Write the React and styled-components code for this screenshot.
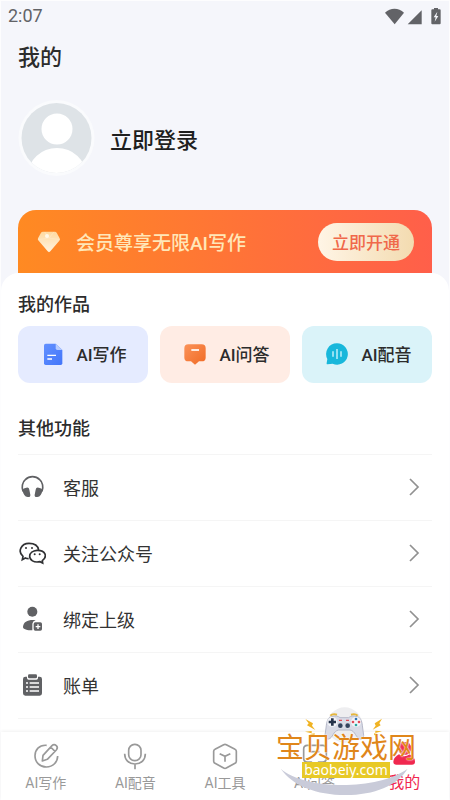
import React, { useState } from 'react';
import styled, { createGlobalStyle } from 'styled-components';

const GlobalStyle = createGlobalStyle`
	* {
		box-sizing: border-box;
	}
	body {
		margin: 0;
		background-color: #f5f6fb;
		color: #2c2c2c;
		font-family: Roboto, 'Noto Sans CJK SC', sans-serif;
	}
	button {
		border: none;
		font-family: inherit;
		color: inherit;
		cursor: pointer;
	}
	a {
		color: inherit;
		text-decoration: none;
	}
	svg {
		display: block;
		flex-shrink: 0;
	}
`;
const PageStyled = styled.div`
	min-height: 100vh;
	display: flex;
	flex-direction: column;
	border: 1px solid #fdfdfe;
	border-bottom: none;
`;
const StatusBar = styled.div`
	height: 29px;
	padding: 0 7px;
	display: flex;
	align-items: center;
	justify-content: space-between;
	font-size: 18px;
	color: #626367;
`;
const HeaderStyled = styled.header`
	padding: 11px 17px 0;
`;
const PageTitle = styled.h1`
	margin: 0;
	font-size: 22px;
	line-height: 34px;
	font-weight: 500;
`;
const LoginButton = styled.button`
	margin-top: 24px;
	padding: 0;
	display: flex;
	align-items: center;
	gap: 14px;
	background: none;
	font-size: 22px;
	font-weight: 500;
	color: #1f1f1f;
`;
const VipBanner = styled.section`
	height: 63px;
	margin: 33px 17px 0;
	padding: 0 18px;
	display: flex;
	align-items: center;
	gap: 14px;
	border-radius: 18px 18px 0 0;
	background: linear-gradient(90deg, #ff8a22, #ff5f4a);
`;
const VipText = styled.span`
	flex: 1;
	font-size: 19px;
	font-weight: 500;
	color: #ffe7b8;
`;
const VipButton = styled.button`
	height: 38px;
	padding: 0 14px;
	border-radius: 19px;
	background: linear-gradient(90deg, #fff5e6, #f3dbb0);
	font-size: 17px;
	font-weight: 500;
	color: #f0684a;
`;
const SheetStyled = styled.main`
	flex: 1;
	padding: 18px 17px 13px;
	border-radius: 18px 18px 0 0;
	background-color: white;
`;
const SectionTitle = styled.h2`
	margin: 0;
	font-size: 18px;
	line-height: 28px;
	font-weight: 500;
`;
const TileRow = styled.div`
	margin: 7px 0 32px;
	display: grid;
	grid-template-columns: repeat(3, 1fr);
	gap: 12px;
`;
const TileStyled = styled.button`
	height: 57px;
	padding: 0 0 2px 3px;
	display: flex;
	align-items: center;
	justify-content: center;
	gap: 12px;
	border-radius: 12px;
	background-color: ${({ $color }) => $color};
	font-size: 17px;
	font-weight: 500;
`;
const MenuList = styled.ul`
	margin: 11px 0 0;
	padding: 0;
	list-style: none;
	border-top: 1px solid #f5f5f5;
`;
const MenuLink = styled.a`
	height: 66px;
	padding: 0 7px 2px 0;
	display: flex;
	align-items: center;
	gap: 17px;
	border-bottom: 1px solid #f5f5f5;
	font-size: 18px;
	color: #333;
`;
const MenuLabel = styled.span`
	flex: 1;
`;
const TabBar = styled.nav`
	position: sticky;
	bottom: 0;
	height: 68px;
	display: grid;
	grid-template-columns: repeat(5, 1fr);
	background-color: white;
	box-shadow: 0 -1px 3px rgba(0, 0, 0, 0.06);
`;
const TabStyled = styled.a`
	padding-top: 10px;
	display: flex;
	flex-direction: column;
	align-items: center;
	font-size: ${({ $active }) => ($active ? '16px' : '14px')};
	line-height: 26px;
	color: ${({ $active }) => ($active ? '#f0284f' : '#999')};
`;
const Watermark = styled.div`
	position: absolute;
	right: 32px;
	bottom: 3px;
	width: 142px;
	height: 90px;
	padding-top: 29px;
	display: flex;
	flex-direction: column;
	align-items: center;
	pointer-events: none;
`;
const WatermarkArt = styled.svg`
	position: absolute;
	inset: 0;
`;
const WatermarkName = styled.span`
	position: relative;
	font-size: 28px;
	line-height: 26px;
	white-space: nowrap;
	color: #e0861a;
	text-shadow: 0 0 1px #fff, 0 0 2px #fff;
`;
const WatermarkSite = styled.span`
	position: relative;
	height: 16px;
	padding: 0 2px;
	background-color: #e8c926;
	font-family: 'Noto Sans', sans-serif;
	font-size: 14px;
	line-height: 15px;
	color: white;
`;

const StatusIcons = () => (
	<svg width="58" height="18" viewBox="480 15 174 54" fill="#626367">
		<path d="M483 32C499 16 524 16 540 32L512 67Z" />
		<path d="M593 25V67H551Z" />
		<path d="M630 18h12v4h5q3 0 3 3v39q0 3-3 3h-22q-3 0-3-3V25q0-3 3-3h5Z" />
		<path d="M640 29l-11 17h6l-3 13 11-17h-6Z" fill="#f5f6fb" />
	</svg>
);

const Avatar = () => (
	<svg width="78" height="78" viewBox="0 0 78 78">
		<defs>
			<clipPath id="avatar">
				<circle cx="38.500" cy="39" r="35" />
			</clipPath>
		</defs>
		<circle cx="38.500" cy="39" r="38" fill="#fafbfd" />
		<g clipPath="url(#avatar)">
			<rect width="78" height="78" fill="#dee3e7" />
			<circle cx="39" cy="30" r="15.500" fill="#fff" />
			<ellipse cx="39" cy="76" rx="29" ry="27" fill="#fff" />
		</g>
	</svg>
);

const DiamondIcon = () => (
	<svg width="26" height="26" viewBox="108 85 78 78">
		<defs>
			<linearGradient id="diamond" x2="0" y2="1">
				<stop stopColor="#ffd9a0" />
				<stop offset="1" stopColor="#fff3df" />
			</linearGradient>
		</defs>
		<path
			d="M129 93h36q3 0 5 3l9 17q2 4-1 7l-27 32q-4 5-8 0l-27-32q-4-3-2-7l9-17q2-3 6-3Z"
			fill="url(#diamond)"
		/>
		<path d="M134 94l13 18 15-18M115 117l32-5 32 5" fill="none" stroke="#ffe9c8" strokeWidth="2" />
		<circle cx="141" cy="106" r="6" fill="#fff8ea" />
	</svg>
);

const WriteTileIcon = () => (
	<svg width="22" height="24" viewBox="126 156 66 72">
		<defs>
			<linearGradient id="doc" x2="1" y2="1">
				<stop stopColor="#6290ff" />
				<stop offset="1" stopColor="#4376fa" />
			</linearGradient>
		</defs>
		<path d="M137 161h30l20 19v40q0 5-5 5h-45q-5 0-5-5v-54q0-5 5-5Z" fill="url(#doc)" />
		<path d="M167 161v14q0 5 5 5h15Z" fill="#b6cbff" />
		<path d="M142 196h26M142 207h14" stroke="#fff" strokeWidth="4" />
	</svg>
);

const AskTileIcon = () => (
	<svg width="24" height="24" viewBox="550 158 72 72">
		<defs>
			<linearGradient id="ask" x2="1" y2="1">
				<stop stopColor="#fb9258" />
				<stop offset="1" stopColor="#f06a24" />
			</linearGradient>
		</defs>
		<path
			d="M566 165h40q12 0 12 12v28q0 11-12 11h-8l-12 10-12-10h-8q-12 0-12-11v-28q0-12 12-12Z"
			fill="url(#ask)"
		/>
		<path d="M575 182h23" stroke="#fff" strokeWidth="5" />
	</svg>
);

const VoiceTileIcon = () => (
	<svg width="24" height="24" viewBox="302 157 72 72">
		<path d="M338 161a32 32 0 1 1-13 61l-15 2q-4 0-3-4l2-12A32 32 0 0 1 338 161Z" fill="#18b7db" />
		<path d="M326 185v16M338 178v30M350 185v16" stroke="#d3f6ff" strokeWidth="4" />
	</svg>
);

const HeadsetIcon = () => (
	<svg width="28" height="28" viewBox="54 72 84 84">
		<path
			d="M69 127C64 115 67 99 76 92C88 80 107 80 119 92C128 99 131 115 126 127"
			fill="none"
			stroke="#606164"
			strokeWidth="5"
		/>
		<path
			d="M79 116q8-2 9 6l3 15q1 7-6 7-8 1-12-6-4-6-5-13-1-7 11-9ZM116 116q-8-2-9 6l-3 15q-1 7 6 7 8 1 12-6 4-6 5-13 1-7-11-9Z"
			fill="#606164"
		/>
	</svg>
);

const WechatIcon = () => (
	<svg width="28" height="28" viewBox="54 267 84 84" fill="none" stroke="#303133" strokeWidth="5">
		<path d="M86 326q-6 0-10-2l-9 5 2-10C52 305 63 280 87 280c16 0 27 8 29 20" />
		<path d="M111 301C137 300 143 320 127 332l1 7-8-4c-19 4-31-5-31-16 0-10 10-17 22-18Z" />
		<g fill="#303133" stroke="none">
			<circle cx="78" cy="294" r="3" />
			<circle cx="96" cy="294" r="3" />
			<circle cx="104" cy="313" r="3" />
			<circle cx="119" cy="313" r="3" />
		</g>
	</svg>
);

const InviteIcon = () => (
	<svg width="28" height="28" viewBox="54 75 84 84" fill="#606164">
		<circle cx="97" cy="95" r="15" />
		<path d="M69 140C71 124 84 118 107 120Q98 123 97 131v20c-14 0-29-3-28-11Z" />
		<rect x="101" y="127" width="25" height="25" rx="5" />
		<path d="M107 140h14M114 133v14" stroke="#fff" strokeWidth="4" />
	</svg>
);

const BillIcon = () => (
	<svg width="28" height="28" viewBox="54 271 84 84" fill="#606164">
		<path d="M76 288h5v4q0 5 5 5h23q5 0 5-5v-4h5q7 0 7 7v43q0 7-7 7H76q-7 0-7-7v-43q0-7 7-7Z" />
		<rect x="84" y="281" width="27" height="12" rx="4" />
		<path d="M78 307h6M89 307h28M78 319h6M89 319h28M78 331h6M89 331h28" stroke="#fff" strokeWidth="4" />
	</svg>
);

const ChevronIcon = () => (
	<svg width="22" height="22" viewBox="0 0 22 22" fill="none" stroke="#919191" strokeWidth="1.700">
		<path d="M7 3l8 8-8 8" />
	</svg>
);

const PenTabIcon = () => (
	<svg width="28" height="28" viewBox="93 126 84 84" fill="none" stroke="currentColor" strokeWidth="5">
		<path d="M137 136c-23-2-35 14-35 31 0 20 15 34 34 34 20 0 34-15 34-33" />
		<path d="M124 183l2-17 27-29q6-6 13 0 6 6 0 13l-27 28ZM149 141l13 13" strokeLinejoin="round" />
	</svg>
);

const MicTabIcon = () => (
	<svg width="28" height="28" viewBox="363 126 84 84" fill="none" stroke="currentColor" strokeWidth="5">
		<rect x="386" y="133" width="37" height="49" rx="18" />
		<path d="M374 161c0 18 12 31 31 31s31-13 31-31M405 192v16" />
	</svg>
);

const ToolTabIcon = () => (
	<svg width="28" height="28" viewBox="633 126 84 84" fill="none" stroke="currentColor" strokeWidth="5">
		<path
			d="M671 134q4-2 8 0l26 14q4 2 4 6v30q0 4-4 6l-26 14q-4 2-8 0l-26-14q-4-2-4-6v-30q0-4 4-6Z"
		/>
		<path d="M659 161l16 8 16-8M675 169v16" />
	</svg>
);

const AskTabIcon = () => (
	<svg width="28" height="28" viewBox="153 126 84 84" fill="none" stroke="currentColor" strokeWidth="5">
		<path d="M172 136h46q11 0 11 11v28q0 11-11 11h-12l-11 11-11-11h-12q-11 0-11-11v-28q0-11 11-11Z" />
		<path d="M182 155h26" />
	</svg>
);

const MineTabIcon = () => (
	<svg width="28" height="28" viewBox="423 126 84 84" fill="currentColor">
		<circle cx="467" cy="145" r="20" />
		<path d="M450 163q16 12 32 0 16 8 16 22 0 9-9 9h-47q-9 0-9-9 1-14 17-22Z" />
	</svg>
);

const PadArt = () => (
	<WatermarkArt width="142" height="90" viewBox="75 21 426 270">
		<circle cx="284" cy="75" r="53" fill="#eeeef0" />
		<path d="M92 206C164 270 382 272 473 206C442 257 373 285 287 285C199 285 128 257 92 206Z" fill="#c9cbd9" />
		<path d="M241 47q6-6 20-3M303 44q14-3 20 3" fill="none" stroke="#e5b63c" strokeWidth="6" />
		<path
			d="M244 50Q262 45 270 53H296Q304 45 322 50C334 54 336 66 338 84L341 106Q341 118 330 117C318 115 316 92 300 90H266C250 92 248 115 236 117Q225 118 225 106L228 84C230 66 232 54 244 50Z"
			fill="#d9dbe6"
			stroke="#b6b9c9"
			strokeWidth="3"
		/>
		<circle cx="247" cy="66" r="15" fill="#f3f4f8" />
		<circle cx="318" cy="66" r="15" fill="#f3f4f8" />
		<path d="M247 55v22M236 66h22" stroke="#26334a" strokeWidth="8" />
		<circle cx="318" cy="57" r="4" fill="#2e72b4" />
		<circle cx="309" cy="66" r="4" fill="#e34b57" />
		<circle cx="327" cy="66" r="4" fill="#e34b57" />
		<circle cx="318" cy="75" r="4" fill="#2aa7a0" />
		<circle cx="271" cy="77" r="7" fill="#34435d" />
		<circle cx="293" cy="77" r="7" fill="#34435d" />
		<path d="M267 61h9M288 61h9" stroke="#e34b57" strokeWidth="4" />
		<g fill="#f0b323">
			<path d="M166 57l23 13-3 7 10 13-25-14 5-6Z" />
			<path d="M396 56l-22 14 3 7-9 12 24-13-4-6Z" />
			<path d="M165 95l20-2v7ZM178 103l16-3v6ZM396 94l-20-2v7ZM386 103l-14-3v6Z" />
		</g>
	</WatermarkArt>
);

const tiles = [
	{ label: 'AI写作', color: '#e5ebff', icon: <WriteTileIcon /> },
	{ label: 'AI问答', color: '#ffece4', icon: <AskTileIcon /> },
	{ label: 'AI配音', color: '#daf3f9', icon: <VoiceTileIcon /> },
];

const menus = [
	{ label: '客服', icon: <HeadsetIcon /> },
	{ label: '关注公众号', icon: <WechatIcon /> },
	{ label: '绑定上级', icon: <InviteIcon /> },
	{ label: '账单', icon: <BillIcon /> },
];

const tabs = [
	{ label: 'AI写作', icon: <PenTabIcon /> },
	{ label: 'AI配音', icon: <MicTabIcon /> },
	{ label: 'AI工具', icon: <ToolTabIcon /> },
	{ label: 'AI问答', icon: <AskTabIcon /> },
	{ label: '我的', icon: <MineTabIcon /> },
];

const App = () => {
	const [activeTab, setActiveTab] = useState('我的');

	return (
		<>
			<GlobalStyle />
			<PageStyled>
				<StatusBar>
					<span>2:07</span>
					<StatusIcons />
				</StatusBar>
				<HeaderStyled>
					<PageTitle>我的</PageTitle>
					<LoginButton type="button">
						<Avatar />
						立即登录
					</LoginButton>
				</HeaderStyled>
				<VipBanner>
					<DiamondIcon />
					<VipText>会员尊享无限AI写作</VipText>
					<VipButton type="button">立即开通</VipButton>
				</VipBanner>
				<SheetStyled>
					<SectionTitle>我的作品</SectionTitle>
					<TileRow>
						{tiles.map((tile) => (
							<TileStyled key={tile.label} type="button" $color={tile.color}>
								{tile.icon}
								{tile.label}
							</TileStyled>
						))}
					</TileRow>
					<SectionTitle>其他功能</SectionTitle>
					<MenuList>
						{menus.map((menu) => (
							<li key={menu.label}>
								<MenuLink href="#">
									{menu.icon}
									<MenuLabel>{menu.label}</MenuLabel>
									<ChevronIcon />
								</MenuLink>
							</li>
						))}
					</MenuList>
				</SheetStyled>
				<TabBar>
					{tabs.map((tab) => (
						<TabStyled
							key={tab.label}
							href="#"
							$active={tab.label === activeTab}
							onClick={() => setActiveTab(tab.label)}
						>
							{tab.icon}
							{tab.label}
						</TabStyled>
					))}
					<Watermark>
						<PadArt />
						<WatermarkName>宝贝游戏网</WatermarkName>
						<WatermarkSite>baobeiy.com</WatermarkSite>
					</Watermark>
				</TabBar>
			</PageStyled>
		</>
	);
};

export default App;
